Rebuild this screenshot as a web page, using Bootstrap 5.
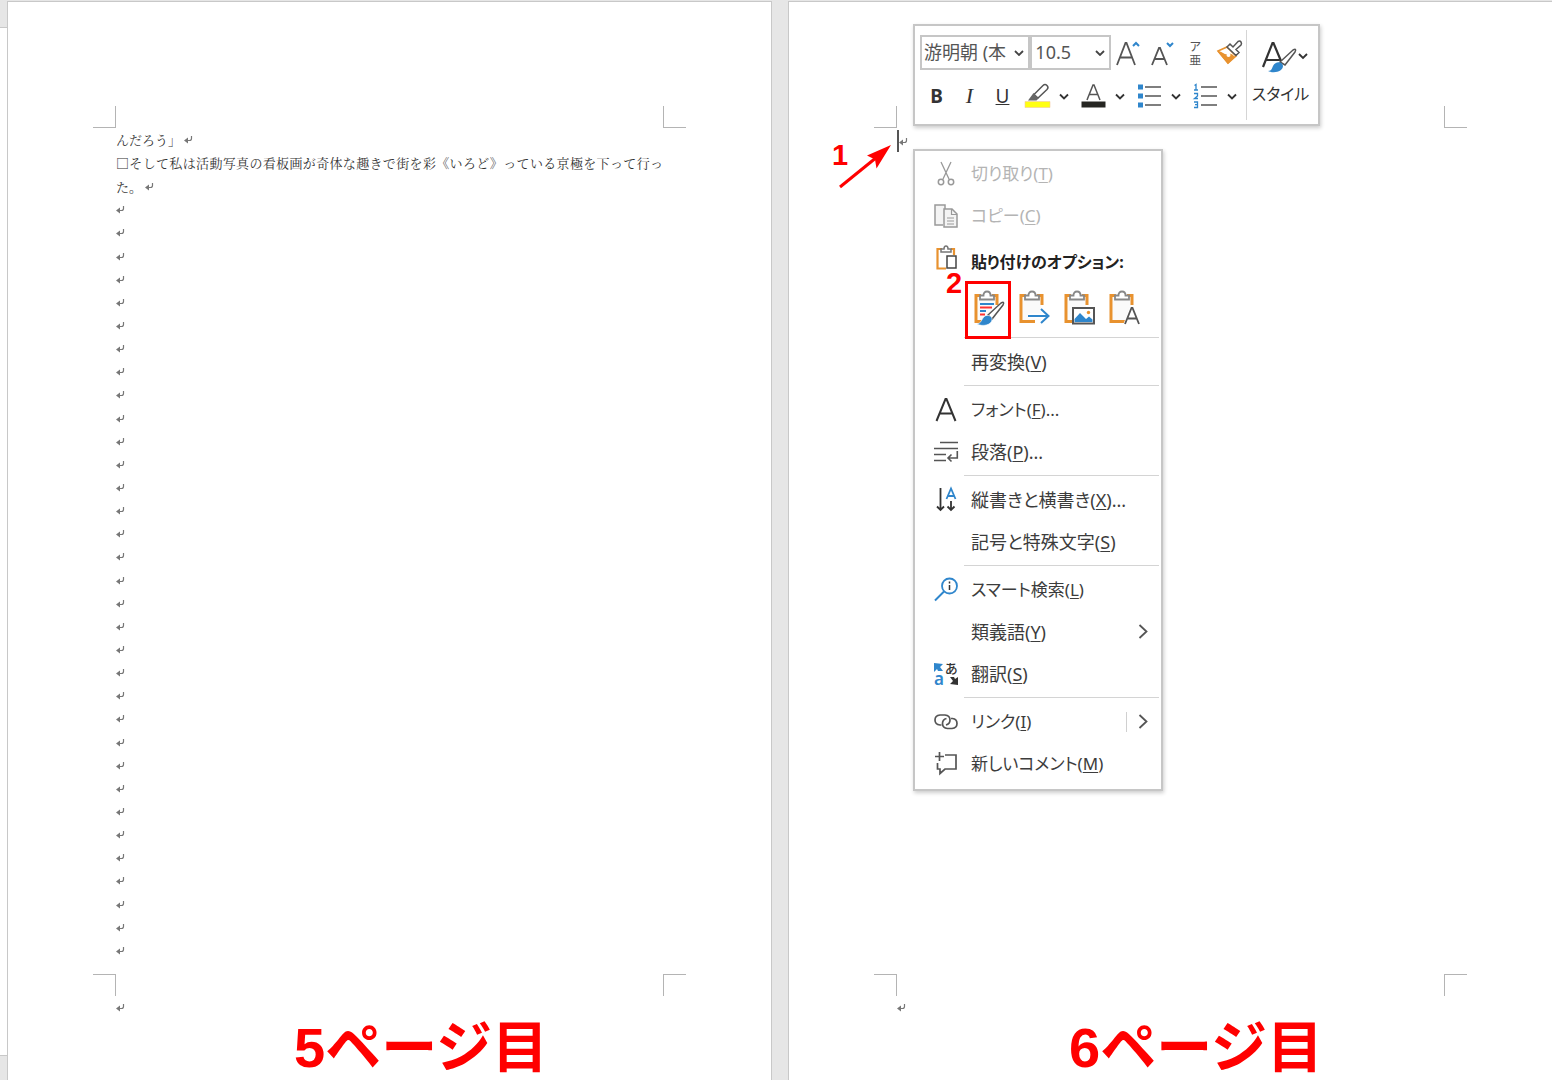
<!DOCTYPE html>
<html lang="ja">
<head>
<meta charset="utf-8">
<meta name="viewport" content="width=device-width, initial-scale=1">
<title>文書</title>
<link href="https://cdn.jsdelivr.net/npm/bootstrap@5.3.0/dist/css/bootstrap.min.css" rel="stylesheet">
<style>
  :root { --edge: #c8c8c8; --ink: #444; --blue: #2f86cc; --orange: #e8922f; --alert: #f00; }
  body { background: #e6e6e6; color: var(--ink); font-family: "Noto Sans", "Noto Sans CJK JP", sans-serif; overflow-x: hidden; }
  svg { display: block; flex: none; fill: none; stroke: #555; stroke-width: 1.5; overflow: visible; }
  .desk { min-height: 100vh; }
  .ruler { width: 7px; padding: 27px 0 24px; }
  .ruler-track { background: #fff; border: solid var(--edge); border-width: 1px 0; }
  .sheet { flex: 1 1 0; min-width: 0; margin-top: 1px; background: #fff; border: 1px solid var(--edge); border-bottom: 0; padding-top: 104px; }
  .sheet + .sheet { margin-left: 16px; border-right: 0; }
  .crops { padding: 0 85px; }
  .crop { width: 23px; height: 22px; border: 0 solid #b4b4b4; }
  .crop-tl { border-width: 0 1px 1px 0; }
  .crop-tr { border-width: 0 0 1px 1px; }
  .crop-bl { border-width: 1px 1px 0 0; }
  .crop-br { border-width: 1px 0 0 1px; }
  .manuscript { padding: 0 108px 12px; font: 400 13px/20px "Noto Serif CJK JP", "Noto Sans CJK JP", serif; color: #333; }
  .para { flex: 1 1 0; gap: 3px; }
  .para-full { display: block; line-height: 24px; text-align: justify; text-align-last: justify; white-space: nowrap; }
  .ret { width: 9px; height: 9px; stroke: #777; stroke-width: 1.2; }
  .caret-line { padding-top: 2px; }
  .caret { width: 2px; height: 22px; background: #555; }
  .page-foot { height: 84px; padding-left: 108px; }
  .page-foot .ret { margin-top: 7px; }
  .page-label { margin: 22px 0 0 169px; font: bold 56px/60px "Liberation Sans", "Noto Sans CJK JP", sans-serif; color: var(--alert); white-space: nowrap; }
  .page-label-b { margin-left: 163px; }

  .popups { left: 124px; top: 22px; gap: 23px; z-index: 2; }
  .panel { background: #fff; border: 2px solid #c6c6c6; box-shadow: 1px 2px 4px rgba(0,0,0,.2); }
  .tool { border: 0; background: none; padding: 0; color: #333; }
  .minibar { width: 407px; height: 102px; padding: 4px; }
  .tools-left { width: 328px; padding: 5px 0 0 1px; border-right: 1px solid #d5d5d5; }
  .tool-select { height: 35px; border: 2px solid #c6c6c6; border-radius: 0; padding: 0 3px; font-size: 18px; color: #555; appearance: none; background: #fff url("data:image/svg+xml,%3Csvg xmlns='http://www.w3.org/2000/svg' viewBox='0 0 10 6'%3E%3Cpath d='M1 1l4 4 4-4' fill='none' stroke='%23444' stroke-width='1.8'/%3E%3C/svg%3E") no-repeat right 4px center / 10px 6px; }
  .sel-font { width: 111px; padding-left: 2px; }
  .sel-size { width: 81px; }
  .row-a .tool { width: 34px; }
  .row-b { height: 42px; margin-top: 5px; }
  .row-b .letter { width: 33px; font-size: 19px; line-height: 24px; }
  .row-b .pick { width: 56px; padding-left: 6px; gap: 9px; }
  .row-b .pick svg:last-child { stroke: #333; }
  .glyph-b { font-weight: 700; }
  .row-b .glyph-i { font-family: "Liberation Serif", serif; font-style: italic; font-size: 22px; }
  .ruby { font: 12px/14px "Noto Sans CJK JP", sans-serif; color: #555; }
  .style-btn { font-size: 16px; font-feature-settings: "palt"; line-height: 28px; }
  .style-btn svg { margin-left: 5px; }

  .ctx { width: 250px; padding: 2px 2px 4px 0; }
  .ctx-item { height: 42px; width: 100%; border: 0; background: none; padding: 0 11px 0 19px; gap: 13px; font-size: 17px; line-height: 24px; font-feature-settings: "palt"; color: #3c3c3c; text-align: left; }
  .ctx-kanji { font-size: 18px; }
  .ctx-item:disabled { color: #b4b4b4; }
  .ctx-item:disabled svg { stroke: #999; }
  .ctx-item u { text-underline-offset: 2px; }
  .ctx-icon { width: 24px; height: 26px; }
  .ctx-head { font-size: 16px; font-weight: 700; color: #222; }
  .ctx-head span { padding-top: 8px; }
  .ctx-rule { height: 1px; margin: 2px 0 3px 49px; background: #d4d4d4; opacity: 1; border: 0; }
  .paste-row { height: 56px; padding: 2px 0 0 51px; }
  .paste-row .tool { width: 45px; height: 54px; }
  .link-split { border-left: 1px solid #d0d0d0; padding-left: 11px; height: 20px; }
  .focus-box { inset: 0 0 -4px -1px; border: 3px solid var(--alert); pointer-events: none; }
  .step { font: bold 29px/30px "Liberation Sans", sans-serif; color: var(--alert); }
  .step-two { left: -20px; top: -13px; }
  .step-one { left: 43px; top: 138px; }
  .arrow { left: 48px; top: 138px; stroke: var(--alert); stroke-width: 3; z-index: 1; }
</style>
<script src="https://cdn.jsdelivr.net/npm/bootstrap@5.3.0/dist/js/bootstrap.bundle.min.js"></script>
</head>
<body>
<svg width="0" height="0" class="position-absolute" aria-hidden="true">
  <symbol id="ret" viewBox="0 0 9 9"><path d="M7.500 1v2.500q0 2-2 2H2"/><path d="M4 2.500v6L0 5.500z" fill="#777" stroke="none"/></symbol>
  <symbol id="down" viewBox="0 0 10 8"><path d="M1 2.500l4 4 4-4" stroke-width="1.800"/></symbol>
  <symbol id="next" viewBox="0 0 10 16"><path d="M1.500 1L8.500 7.500l-7 6.500" stroke-width="1.800"/></symbol>
  <symbol id="board" viewBox="0 0 32 36">
    <path d="M5 7h18v23H5z" fill="#fafafa" stroke="none"/><path d="M8 5.500H3v26h14" stroke="#e8922f" stroke-width="3"/><path d="M19 5.500h5V15" stroke="#e8922f" stroke-width="3"/>
    <path d="M7 9.500V5.500h3.500q0-4 3.500-4t3.500 4H21v4z" fill="#fff" stroke="#888" stroke-width="1.800"/>
  </symbol>
</svg>

<main class="desk d-flex">
  <div class="ruler d-flex flex-column"><div class="ruler-track flex-grow-1"></div></div>

  <section class="sheet d-flex flex-column" aria-label="5ページ目">
    <div class="crops d-flex justify-content-between"><i class="crop crop-tl"></i><i class="crop crop-tr"></i></div>
    <div class="manuscript flex-grow-1 d-flex flex-column" id="blank-lines">
      <div class="para d-flex align-items-center">んだろう」<svg class="ret"><use href="#ret"/></svg></div>
      <div class="para para-full">□そして私は活動写真の看板画が奇体な趣きで街を彩《いろど》っている京極を下って行っ</div>
      <div class="para d-flex align-items-center">た。<svg class="ret"><use href="#ret"/></svg></div>
    </div>
    <div class="crops d-flex justify-content-between"><i class="crop crop-bl"></i><i class="crop crop-br"></i></div>
    <div class="page-foot d-flex align-items-start"><svg class="ret"><use href="#ret"/></svg><div class="page-label">5ページ目</div></div>
  </section>

  <section class="sheet d-flex flex-column position-relative" aria-label="6ページ目">
    <div class="crops d-flex justify-content-between"><i class="crop crop-tl"></i><i class="crop crop-tr"></i></div>
    <div class="manuscript flex-grow-1">
      <div class="caret-line d-flex align-items-center"><span class="caret"></span><svg class="ret"><use href="#ret"/></svg></div>
    </div>
    <div class="crops d-flex justify-content-between"><i class="crop crop-bl"></i><i class="crop crop-br"></i></div>
    <div class="page-foot d-flex align-items-start"><svg class="ret"><use href="#ret"/></svg><div class="page-label page-label-b">6ページ目</div></div>

    <span class="step step-one position-absolute">1</span>
    <svg class="arrow position-absolute" width="56" height="50" viewBox="0 0 56 50"><path d="M3 47L40 17"/><path d="M54 5L30 15.500l8 4 1.500 9z" fill="#f00" stroke="none"/></svg>

    <div class="popups position-absolute d-flex flex-column align-items-start">
      <div class="panel minibar d-flex" role="toolbar" aria-label="書式">
        <div class="tools-left">
          <div class="row-a d-flex align-items-center">
            <select class="tool-select sel-font" aria-label="フォント"><option>游明朝 (本</option></select>
            <select class="tool-select sel-size" aria-label="サイズ"><option>10.5</option></select>
            <button class="tool d-flex justify-content-center" aria-label="フォントの拡大"><svg width="26" height="28" viewBox="0 0 26 28"><path d="M2 26L10.500 4h1L20 26M5 18.500h12" stroke-width="1.800"/><path d="M18 7l3-3 3 3" stroke="#2f86cc" stroke-width="2"/></svg></button>
            <button class="tool d-flex justify-content-center" aria-label="フォントの縮小"><svg width="26" height="28" viewBox="0 0 26 28"><path d="M3 26L10 9h1l7 17M5.500 20h10" stroke-width="1.800"/><path d="M18 4l3 3 3-3" stroke="#2f86cc" stroke-width="2"/></svg></button>
            <button class="tool ruby text-center" aria-label="ルビ">ア<br>亜</button>
            <button class="tool d-flex justify-content-center" aria-label="書式のコピー"><svg width="26" height="26" viewBox="0 0 26 26"><path d="M2 11l9-4 9 9-8 7z" fill="#fff" stroke="#e8922f" stroke-width="1.600"/><path d="M3 12c3 0 5 4 8 3s4-1 7 2l-6 6z" fill="#e8922f" stroke="#e8922f"/><circle cx="12.500" cy="15" r="2" fill="#fff" stroke="none"/><path d="M11 7l3-3 3 3 5-5.500q2-1 3 .500t0 3L20 9.500l3 3-3 3z" fill="#fff" stroke="#555"/></svg></button>
          </div>
          <div class="row-b d-flex align-items-center">
            <button class="tool letter glyph-b" aria-label="太字">B</button>
            <button class="tool letter glyph-i" aria-label="斜体">I</button>
            <button class="tool letter" aria-label="下線"><u>U</u></button>
            <button class="tool pick d-flex align-items-center" aria-label="蛍光ペン"><svg width="25" height="26" viewBox="0 0 25 26"><path d="M0 18.500h25v6H0z" fill="#ff1" stroke="#f3c9a0" stroke-width=".6"/><path d="M9 11.500L18 2.500q2-2 4 0t0 4L13 15z" fill="#fff"/><path d="M8.500 10l5 5.500-2 2H3z" fill="#666" stroke="none"/></svg><svg width="10" height="8"><use href="#down"/></svg></button>
            <button class="tool pick d-flex align-items-center" aria-label="フォントの色"><svg width="25" height="26" viewBox="0 0 25 26"><path d="M.5 18.500h24v6H.5z" fill="#262622" stroke="none"/><path d="M6 17L12 2h1l6 15M8 11.500h9"/></svg><svg width="10" height="8"><use href="#down"/></svg></button>
            <button class="tool pick d-flex align-items-center" aria-label="箇条書き"><svg width="25" height="26" viewBox="0 0 25 26"><path d="M8 4h16M8 13h16M8 22h16" stroke-width="1.600"/><path d="M1 1.500h5v5H1zM1 10.500h5v5H1zM1 19.500h5v5H1z" fill="#2f86cc" stroke="none"/></svg><svg width="10" height="8"><use href="#down"/></svg></button>
            <button class="tool pick d-flex align-items-center" aria-label="段落番号"><svg width="25" height="26" viewBox="0 0 25 26"><path d="M8 4h16M8 13h16M8 22h16" stroke-width="1.600"/><path d="M1.500 2.500L3 1.500V7M1 7h4M1 10.500h3.500V13l-3 2.500H5M1 19h3.500v5.500H1M2 21.700h2.500" stroke="#2f86cc" stroke-width="1.300"/></svg><svg width="10" height="8"><use href="#down"/></svg></button>
          </div>
        </div>
        <button class="tool style-btn flex-grow-1 d-flex flex-column align-items-center" aria-label="スタイル">
          <svg width="48" height="50" viewBox="0 0 48 50"><path d="M4 37L13.500 13h1L22 31M7.500 30h13" stroke="#333" stroke-width="2.200"/><path d="M21 32L34 20q4-2 2 2L26 35z" fill="#fff"/><path d="M9 41c4 0 4-3 5-5 3-6 10-4 10 0 0 5-8 8-15 5z" fill="#2f86cc" stroke="none"/><path d="M40 24l4 4 4-4" stroke="#333" stroke-width="1.800"/></svg>
          <span>スタイル</span>
        </button>
      </div>

      <div class="panel ctx" role="menu">
        <button class="ctx-item d-flex align-items-center" disabled><svg class="ctx-icon" viewBox="0 0 24 26"><path d="M7 1l8 17M17 1L9 18" stroke-width="1.300"/><circle cx="7" cy="21" r="2.700"/><circle cx="17" cy="21" r="2.700"/></svg><span>切り取り(<u>T</u>)</span></button>
        <button class="ctx-item d-flex align-items-center" disabled><svg class="ctx-icon" viewBox="0 0 24 26"><path d="M9 22H1V2h10v4M10 6h8l5 5v13H10z" fill="#f4f4f4"/><path d="M17.500 6v5.500H23M13 15h7M13 18h7M13 21h7" stroke-width="1.200"/></svg><span>コピー(<u>C</u>)</span></button>
        <div class="ctx-item ctx-head d-flex align-items-center"><svg class="ctx-icon" viewBox="0 0 24 26"><path d="M8 4H3.500v19.500H12M17 4h3v6" stroke="#e8922f" stroke-width="2.200"/><path d="M7 7V4h3q0-3 2-3t2 3h3v3z" fill="#fff" stroke="#777"/><path d="M13 11h9v12h-9z" fill="#fff" stroke="#444"/></svg><span>貼り付けのオプション:</span></div>
        <div class="paste-row d-flex">
          <button class="tool position-relative d-flex align-items-center justify-content-center" aria-label="元の書式を保持">
            <svg width="32" height="36" viewBox="0 0 32 36"><use href="#board"/><path d="M7 14h14M7 21h6" stroke="#2f86cc" stroke-width="1.800"/><path d="M7 17.500h12M7 24.500h5" stroke="#f33" stroke-width="2"/><path d="M15 25L28 13q4-2 2 2L19 29z" fill="#fff"/><path d="M4 34c4-1 4-3 6-6 3-5 10-2 9 2-1 5-9 7-15 4z" fill="#2f86cc" stroke="#fff" stroke-width=".6"/></svg>
            <span class="focus-box position-absolute"></span><span class="step step-two position-absolute">2</span>
          </button>
          <button class="tool d-flex align-items-center justify-content-center" aria-label="書式を結合"><svg width="32" height="36" viewBox="0 0 32 36"><use href="#board"/><path d="M10 26h20M23 19l7.500 7-7.500 7" stroke="#fff" stroke-width="5"/><path d="M10 26h20M23 19l7.500 7-7.500 7" stroke="#2f86cc" stroke-width="2"/></svg></button>
          <button class="tool d-flex align-items-center justify-content-center" aria-label="図"><svg width="32" height="36" viewBox="0 0 32 36"><use href="#board"/><path d="M10 18h21v15.500H10z" fill="#fff" stroke="#555" stroke-width="2"/><path d="M11.500 32v-3l5.500-6 6 6 3-2.500 3.500 3V32z" fill="#2f86cc" stroke="none"/><circle cx="25.500" cy="22.500" r="1.700" fill="#e8922f" stroke="none"/></svg></button>
          <button class="tool d-flex align-items-center justify-content-center" aria-label="テキストのみ保持"><svg width="32" height="36" viewBox="0 0 32 36"><use href="#board"/><path d="M15 35l7.500-19h2L32 35z" fill="#fff" stroke="none"/><path d="M17 34l6.500-16h1L31 34M19.500 28.500h9" stroke-width="1.800"/></svg></button>
        </div>
        <hr class="ctx-rule">
        <button class="ctx-item ctx-kanji d-flex align-items-center"><span class="ctx-icon"></span><span>再変換(<u>V</u>)</span></button>
        <hr class="ctx-rule">
        <button class="ctx-item d-flex align-items-center"><svg class="ctx-icon" viewBox="0 0 24 26"><path d="M2.500 24L11.500 2h1l9 22M6 16.500h12" stroke="#333" stroke-width="2"/></svg><span>フォント(<u>F</u>)...</span></button>
        <button class="ctx-item ctx-kanji d-flex align-items-center"><svg class="ctx-icon" viewBox="0 0 24 26"><path d="M6 3.500h18M0 9.500h24M0 15.500h12M0 21.500h12M23.300 12v7H14M17.500 15.500L14 19l3.500 3.500" stroke-width="1.600"/></svg><span>段落(<u>P</u>)...</span></button>
        <hr class="ctx-rule">
        <button class="ctx-item ctx-kanji d-flex align-items-center"><svg class="ctx-icon" viewBox="0 0 24 26"><path d="M6.500 1v22M3 19.500L6.500 23l3.500-3.500M17 14v9M13.500 19.500L17 23l3.500-3.500" stroke="#333" stroke-width="1.800"/><path d="M12.500 12L17 1.500 21.500 12M14 9h6" stroke="#2f86cc" stroke-width="1.800"/></svg><span>縦書きと横書き(<u>X</u>)...</span></button>
        <button class="ctx-item ctx-kanji d-flex align-items-center"><span class="ctx-icon"></span><span>記号と特殊文字(<u>S</u>)</span></button>
        <hr class="ctx-rule">
        <button class="ctx-item d-flex align-items-center"><svg class="ctx-icon" viewBox="0 0 24 26"><circle cx="15.500" cy="9" r="7.500" stroke="#2f86cc" stroke-width="1.800"/><path d="M10 14.500L1 23.500" stroke="#2f86cc" stroke-width="2"/><path d="M15.500 8v5M15.500 4.500v2" stroke="#333"/></svg><span>スマート検索(<u>L</u>)</span></button>
        <button class="ctx-item ctx-kanji d-flex align-items-center"><span class="ctx-icon"></span><span class="flex-grow-1">類義語(<u>Y</u>)</span><svg width="10" height="16"><use href="#next"/></svg></button>
        <button class="ctx-item ctx-kanji d-flex align-items-center"><svg class="ctx-icon" viewBox="0 0 24 26"><path d="M0 2l9 1-3 3 3 4H4L3 8l-3 3z" fill="#2f86cc" stroke="none"/><text x="0" y="24" font-size="17" font-weight="600" fill="#2f86cc" stroke="none">a</text><text x="11" y="12" font-size="13" font-weight="500" fill="#333" stroke="none">あ</text><path d="M24 24l-8-1 3-3-3-4 4 0 1 2 3-2z" fill="#333" stroke="none"/></svg><span>翻訳(<u>S</u>)</span></button>
        <hr class="ctx-rule">
        <button class="ctx-item d-flex align-items-center"><svg class="ctx-icon" viewBox="0 0 24 26"><path d="M7.500 16H6q-5-.5-5-5t5-5h5q5 .5 5 5 0 4-4 5" stroke-width="1.700"/><path d="M17 9.500h1.500q4.500.5 4.500 5t-5 5h-4.500q-5-.5-5-5 0-4 4-5" stroke-width="1.700"/></svg><span class="flex-grow-1">リンク(<u>I</u>)</span><span class="link-split d-flex align-items-center"><svg width="10" height="16"><use href="#next"/></svg></span></button>
        <button class="ctx-item d-flex align-items-center"><svg class="ctx-icon" viewBox="0 0 24 26"><path d="M11 4h11v14H11l-5 4.500V18H3.500v-6M5.500 1v9M1 5.500h9" stroke-width="1.700"/></svg><span>新しいコメント(<u>M</u>)</span></button>
      </div>
    </div>
  </section>
</main>
<script>
  // Fill the rest of the 36-line page with empty paragraphs.
  const lines = document.getElementById('blank-lines');
  while (lines.children.length < 36) {
    lines.insertAdjacentHTML('beforeend', '<div class="para d-flex align-items-center"><svg class="ret"><use href="#ret"/></svg></div>');
  }
</script>
</body>
</html>
